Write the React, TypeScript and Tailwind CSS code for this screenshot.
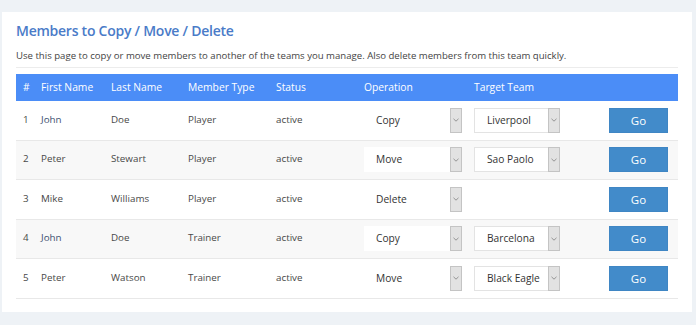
import React from "react";

type Row = {
  n: number;
  first: string;
  last: string;
  type: string;
  status: string;
  op: string;
  team: string | null;
  link?: boolean;
};

const rows: Row[] = [
  { n: 1, first: "John", last: "Doe", type: "Player", status: "active", op: "Copy", team: "Liverpool", link: true },
  { n: 2, first: "Peter", last: "Stewart", type: "Player", status: "active", op: "Move", team: "Sao Paolo" },
  { n: 3, first: "Mike", last: "Williams", type: "Player", status: "active", op: "Delete", team: null },
  { n: 4, first: "John", last: "Doe", type: "Trainer", status: "active", op: "Copy", team: "Barcelona", link: true },
  { n: 5, first: "Peter", last: "Watson", type: "Trainer", status: "active", op: "Move", team: "Black Eagle" },
];

const cols = "grid grid-cols-[18px_70px_77px_88px_88px_110px_135px_1fr]";

function Arrow() {
  return (
    <div className="flex h-[25px] w-[12px] items-center justify-center border border-[#c4c4c4] bg-[#e2e2e2]">
      <svg width="6" height="4" viewBox="0 0 6 4">
        <path d="M0.5 0.8 L3 3.2 L5.5 0.8" fill="none" stroke="#8a8a8a" strokeWidth="0.9" />
      </svg>
    </div>
  );
}

export default function App() {
  return (
    <div
      className="h-[325px] w-[696px] bg-[#eef2f6] pt-[12px] pl-[2px]"
      style={{ fontFamily: '"Open Sans", sans-serif' }}
    >
      <div className="h-[300px] w-[690px] bg-white px-[14px] pt-[8px]">
        <h1 className="text-[14px] font-semibold leading-[22px] tracking-[-0.25px] text-[#4a7bc8]">
          Members to Copy / Move / Delete
        </h1>
        <p className="mt-[7px] text-[9.6px] leading-[14px] text-[#444]">
          Use this page to copy or move members to another of the teams you manage. Also delete members from this team quickly.
        </p>
        <div className="mt-[4px] h-px w-[662px] bg-[#ececec]" />
        <div className="mt-[6px] w-[662px]">
          <div className={`${cols} h-[27px] items-center bg-[#4b8df7] text-[10.3px] text-white`}>
            <div className="pl-[7px]">#</div>
            <div className="pl-[7px]">First Name</div>
            <div className="pl-[7px]">Last Name</div>
            <div className="pl-[7px]">Member Type</div>
            <div className="pl-[7px]">Status</div>
            <div className="pl-[7px]">Operation</div>
            <div className="pl-[7px]">Target Team</div>
            <div />
          </div>
          {rows.map((r, i) => (
            <div
              key={r.n}
              className={`${cols} h-[39.5px] items-center border-b border-[#e8e8e8] text-[9.8px] text-[#484848] ${
                i % 2 === 1 ? "bg-[#f8f8f8]" : "bg-white"
              }`}
            >
              <div className="pl-[7px]">{r.n}</div>
              <div className={`pl-[7px] ${r.link ? "text-[#3c4f70]" : ""}`}>{r.first}</div>
              <div className="pl-[7px]">{r.last}</div>
              <div className="pl-[7px]">{r.type}</div>
              <div className="pl-[7px]">{r.status}</div>
              <div className="pl-[7px]">
                <div className="flex h-[25px] w-[98px] items-center justify-between bg-white">
                  <span className="pl-[12px] text-[10.2px] text-[#333]">{r.op}</span>
                  <Arrow />
                </div>
              </div>
              <div className="pl-[7px]">
                {r.team && (
                  <div className="flex h-[25px] w-[86px] items-center justify-between border-y border-l border-[#e3e3e3] bg-white">
                    <span className="pl-[12px] text-[10.2px] text-[#333]">{r.team}</span>
                    <Arrow />
                  </div>
                )}
              </div>
              <div className="pl-[7px]">
                <button className="flex h-[25px] w-[59px] items-center justify-center border border-[#3f86c4] bg-[#428bca] text-[11.5px] text-white">
                  Go
                </button>
              </div>
            </div>
          ))}
        </div>
      </div>
    </div>
  );
}
